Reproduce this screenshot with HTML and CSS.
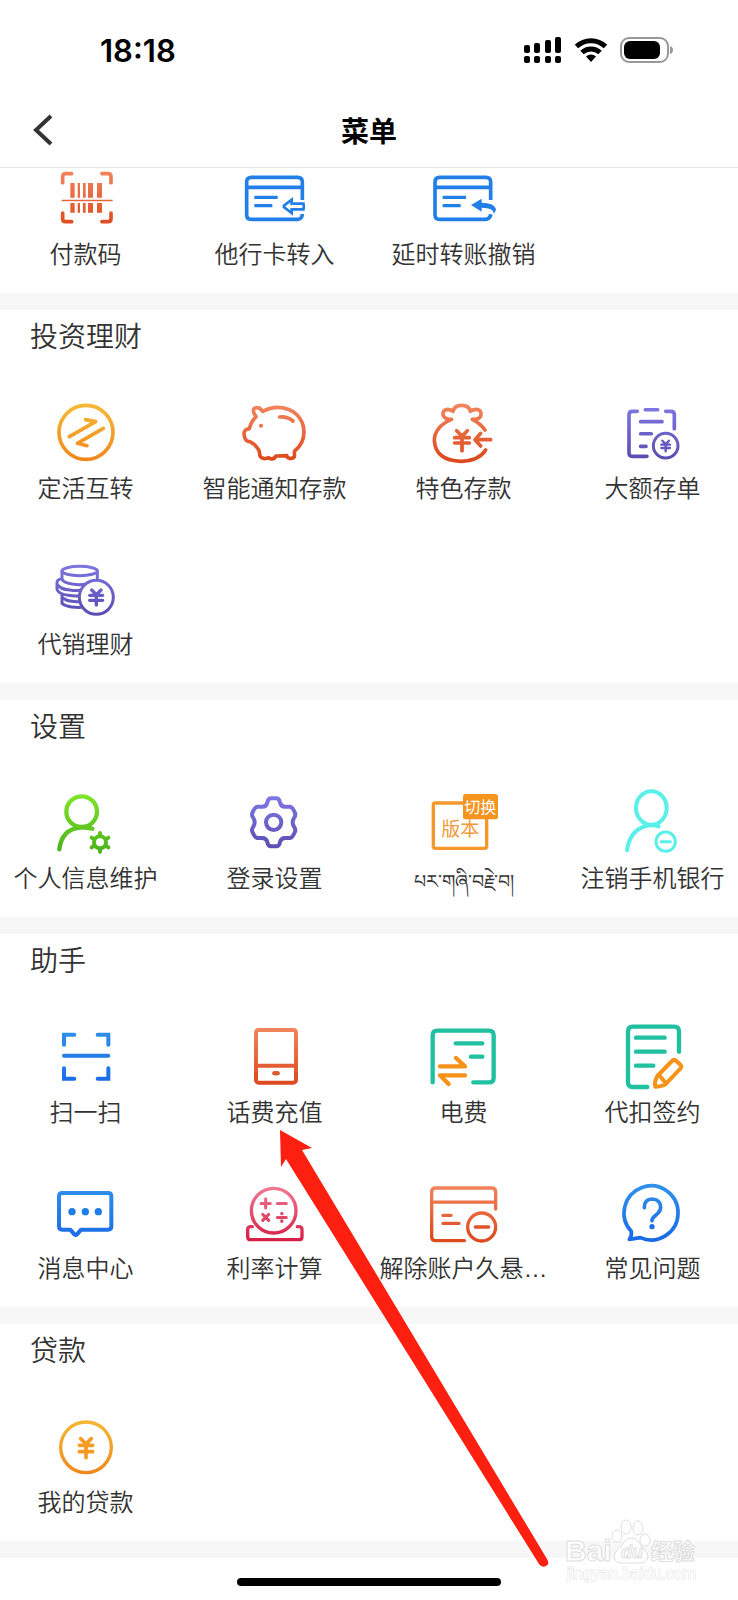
FILE: index.html
```html
<!DOCTYPE html>
<html lang="zh-CN">
<head>
<meta charset="utf-8">
<meta name="viewport" content="width=device-width, initial-scale=1">
<title>菜单</title>
<link rel="stylesheet" href="styles.css">
</head>
<body>
<svg class="defs" aria-hidden="true">
  <defs>
    <linearGradient id="red" gradientUnits="userSpaceOnUse" x1="0" y1="40" x2="0" y2="205"><stop offset="0" stop-color="#f2845c"/><stop offset="1" stop-color="#dc4a1e"/></linearGradient>
    <linearGradient id="blue" gradientUnits="userSpaceOnUse" x1="0" y1="40" x2="0" y2="205"><stop offset="0" stop-color="#3191ea"/><stop offset="1" stop-color="#196ae6"/></linearGradient>
    <linearGradient id="gold" gradientUnits="userSpaceOnUse" x1="0" y1="40" x2="0" y2="205"><stop offset="0" stop-color="#f5b835"/><stop offset="1" stop-color="#f0881c"/></linearGradient>
    <linearGradient id="purple" gradientUnits="userSpaceOnUse" x1="0" y1="40" x2="0" y2="205"><stop offset="0" stop-color="#8078e4"/><stop offset="1" stop-color="#574cb0"/></linearGradient>
    <linearGradient id="green" gradientUnits="userSpaceOnUse" x1="0" y1="40" x2="0" y2="205"><stop offset="0" stop-color="#80e42c"/><stop offset="1" stop-color="#4cb41c"/></linearGradient>
    <linearGradient id="pink" gradientUnits="userSpaceOnUse" x1="0" y1="45" x2="0" y2="205"><stop offset="0" stop-color="#f07a90"/><stop offset="1" stop-color="#d61f48"/></linearGradient>
  </defs>
</svg>

<header class="header">
  <div class="status">
    <span class="time">18:18</span>
    <div class="status-icons">
      <svg width="38" height="26" viewBox="0 0 38 26" aria-label="信号"><g fill="#000"><rect x="0" y="8" width="6" height="8" rx="2"/><rect x="10" y="6" width="6" height="10" rx="2"/><rect x="21" y="3" width="6" height="13" rx="2"/><rect x="31" y="0" width="6" height="16" rx="2"/><rect x="0" y="19" width="6" height="7" rx="2"/><rect x="10" y="19" width="6" height="7" rx="2"/><rect x="21" y="19" width="6" height="7" rx="2"/><rect x="31" y="19" width="6" height="7" rx="2"/></g></svg>
      <svg width="34" height="26" viewBox="0 0 34 26" aria-label="无线网络"><g fill="none" stroke="#000" stroke-width="5"><path d="M2.500 9.500a21 21 0 0 1 29 0"/><path d="M8 15.500a13 13 0 0 1 18 0"/></g><path d="M17 25l-5-5.500a7.500 7.500 0 0 1 10 0z"/></svg>
      <svg width="54" height="26" viewBox="0 0 54 26" aria-label="电池"><rect x="1" y="1" width="47" height="24" rx="8" fill="none" stroke="#999" stroke-width="2"/><rect x="4" y="4" width="36" height="18" rx="6"/><path d="M50 9q3 1 3 4t-3 4z" fill="#999"/></svg>
    </div>
  </div>
  <div class="navbar">
    <button class="back" type="button" aria-label="返回"><svg width="22" height="32" viewBox="0 0 22 32"><path d="M19 2L4 16L19 30" fill="none" stroke="#333" stroke-width="4"/></svg></button>
    <h1 class="title">菜单</h1>
  </div>
</header>

<main>
  <section class="section">
    <div class="grid grid-scrolled">
      <button class="item" type="button">
        <svg class="icon" viewBox="0 0 243 240"><g fill="none" stroke="url(#red)" stroke-width="11" stroke-linecap="round"><path d="M53 74V56Q53 47 62 47H80M171 47H189Q198 47 198 56V74M53 165V182Q53 191 62 191H80M171 191H189Q198 191 198 182V165"/></g><path fill="url(#red)" d="M76 75h13v44h-13zM98 75h7v44h-7zM114 75h8v44h-8zM129 75h15v44h-15zM156 75h15v44h-15zM76 135h13v29h-13zM98 135h7v29h-7zM114 135h8v29h-8zM129 135h15v29h-15zM156 135h15v29h-15zM50 125h153v5h-153z"/></svg>
        <span class="label">付款码</span>
      </button>
      <button class="item" type="button">
        <svg class="icon" viewBox="0 0 243 240"><g fill="none" stroke="#237fe8" stroke-width="11"><path d="M205 126V72Q205 58 191 58H52Q38 58 38 72V170Q38 184 52 184H191Q204 184 205 168M38 88H205"/><path stroke-width="10" d="M61 118H131M61 143H115"/><path stroke-width="8" d="M147 145L173 125V137H212M212 154H173V165L147 145M209 137V154"/></g></svg>
        <span class="label">他行卡转入</span>
      </button>
      <button class="item" type="button">
        <svg class="icon" viewBox="0 0 243 240"><g fill="none" stroke="#237fe8" stroke-width="11"><path d="M203 126V72Q203 58 189 58H50Q36 58 36 72V170Q36 184 50 184H187Q200 184 204 169M36 88H203"/><path stroke-width="10" d="M59 118H129M59 143H113"/></g><path fill="#237fe8" d="M144 141L176 122V134Q212 134 219 153Q219 160 212 167Q213 149 176 149V161z"/></svg>
        <span class="label">延时转账撤销</span>
      </button>
    </div>
  </section>

  <section class="section">
    <h2 class="heading">投资理财</h2>
    <div class="grid">
      <button class="item" type="button">
        <svg class="icon" viewBox="0 0 243 240"><g fill="none" stroke="url(#gold)" stroke-width="11" stroke-linecap="round" stroke-linejoin="round"><circle cx="123" cy="121" r="81"/><path d="M73 134L152 89L122 83M175 109L97 154L126 161"/></g></svg>
        <span class="label">定活互转</span>
      </button>
      <button class="item" type="button">
        <svg class="icon" viewBox="0 0 243 240"><path fill="none" stroke="url(#red)" stroke-width="11" stroke-linejoin="round" stroke-linecap="round" d="M86 58C102 50 115 46 130 46C178 46 210 78 210 121C210 146 198 164 182 177C179 186 184 190 180 196C172 202 160 200 158 191L126 192C120 203 108 202 104 197C94 202 78 200 77 188C78 178 76 174 70 168C64 160 56 152 48 149C36 150 30 138 30 124C31 112 38 112 46 110C50 94 58 82 66 74C56 60 56 50 64 48C74 44 80 50 86 58ZM137 75Q161 73 177 87"/><circle cx="81" cy="101" r="6" fill="#ec7048"/></svg>
        <span class="label">智能通知存款</span>
      </button>
      <button class="item" type="button">
        <svg class="icon" viewBox="0 0 243 240"><path fill="none" stroke="url(#red)" stroke-width="11" stroke-linejoin="round" stroke-linecap="round" d="M186 114Q172 94 148 82Q170 84 174 70Q176 52 158 52Q150 52 142 58Q138 40 116 40Q94 40 90 58Q82 52 74 52Q58 54 60 68Q64 82 86 82Q34 104 34 146Q38 206 114 208Q168 206 188 174M101 116L117 133L133 116M95 137H139M95 153H139M117 137V176M203 143H156M173 124L156 143L173 162"/></svg>
        <span class="label">特色存款</span>
      </button>
      <button class="item" type="button">
        <svg class="icon" viewBox="0 0 243 240"><g fill="none" stroke="url(#purple)" stroke-width="11" stroke-linecap="round"><path d="M76 58H61Q51 58 51 68V183Q51 193 61 193H105M100 53.200H137M161 58H177Q187 58 187 68V110M86 89H150M86 125.200H118M86 163.200H102"/><circle cx="161" cy="161" r="37" stroke-width="9"/><path stroke-width="7" d="M151 146L161 157L171 146M148 158H174M148 168H174M161 157V178"/></g></svg>
        <span class="label">大额存单</span>
      </button>
      <button class="item" type="button">
        <svg class="icon" viewBox="0 0 243 240"><g fill="none" stroke="url(#purple)" stroke-width="9" stroke-linecap="round"><ellipse cx="104" cy="69" rx="53" ry="14"/><path d="M51 69V94Q58 108 104 110Q113 110 120 109M157 69V90M51 92Q36 94 36 104V124Q40 138 70 142Q86 145 101 144M36 108Q44 124 75 126Q90 129 104 127M51 142V166Q58 174 80 177Q96 179 109 178M53 150Q64 158 80 160Q92 162 101 161"/><circle cx="154" cy="148" r="51"/><path stroke-width="10" d="M140 126L154 140L168 126M134 142H173M134 157H173M154 142V171"/></g></svg>
        <span class="label">代销理财</span>
      </button>
    </div>
  </section>

  <section class="section">
    <h2 class="heading">设置</h2>
    <div class="grid">
      <button class="item" type="button">
        <svg class="icon" viewBox="0 0 243 240"><g fill="none" stroke="url(#green)" stroke-width="13" stroke-linecap="round"><circle cx="110" cy="89" r="46"/><path d="M43 202Q50 142 105 137Q124 135 142 140"/><circle cx="165" cy="181" r="18" stroke-width="12"/><path stroke-width="12" d="M165 159V153M165 203V209M184 170L190 167M184 192L190 196M146 170L140 167M146 192L140 196"/></g></svg>
        <span class="label">个人信息维护</span>
      </button>
      <button class="item" type="button">
        <svg class="icon" viewBox="0 0 243 240"><g fill="none" stroke="url(#purple)" stroke-width="12" stroke-linejoin="round"><circle cx="119" cy="121" r="23"/><path d="M110 49H128Q136 50 138 62Q142 76 156 74L168 74Q176 76 183 93Q186 99 180 108Q172 121 180 134Q186 143 183 149Q176 166 168 168L156 168Q142 166 138 180Q136 192 128 193H110Q102 192 100 180Q96 166 82 168L70 168Q62 166 55 149Q52 143 58 134Q66 121 58 108Q52 99 55 93Q62 76 70 74L82 74Q96 76 100 62Q102 50 110 49Z"/></g></svg>
        <span class="label">登录设置</span>
      </button>
      <button class="item" type="button">
        <svg class="icon" viewBox="0 0 243 240"><rect x="31" y="63" width="160" height="136" rx="6" fill="none" stroke="#f5972a" stroke-width="10"/><text class="icon-text" x="112" y="163" font-size="57" fill="#f09a38">版本</text><rect x="120" y="36" width="105" height="76" rx="8" fill="#f5941f"/><text class="icon-text" x="172" y="92" font-size="48" fill="#fff">切换</text></svg>
        <span class="label label-bo" lang="bo">པར་གཞི་བརྗེ་བ།</span>
      </button>
      <button class="item" type="button">
        <svg class="icon" viewBox="0 0 243 240"><g fill="none" stroke="#58f0e8" stroke-width="12" stroke-linecap="round"><ellipse cx="118" cy="78" rx="46" ry="50"/><path d="M45 205Q54 140 112 130Q126 128 140 133"/><circle cx="161" cy="179" r="29" stroke-width="9"/><path stroke-width="9" d="M147 179H175"/></g></svg>
        <span class="label">注销手机银行</span>
      </button>
    </div>
  </section>

  <section class="section">
    <h2 class="heading">助手</h2>
    <div class="grid">
      <button class="item" type="button">
        <svg class="icon" viewBox="0 0 243 240"><path fill="none" stroke="url(#blue)" stroke-width="12" stroke-linecap="round" d="M57 86V56H88M158 56H190V86M57 157V188H88M158 188H190V157M57 119.200L190 119"/></svg>
        <span class="label">扫一扫</span>
      </button>
      <button class="item" type="button">
        <svg class="icon" viewBox="0 0 243 240"><g fill="none" stroke="url(#red)" stroke-width="12" stroke-linecap="round"><rect x="66" y="42" width="120" height="158" rx="8"/><path d="M66 149.200L186 149M121 172H131"/><path stroke="#dc5a30" d="M121 172H131"/></g></svg>
        <span class="label">话费充值</span>
      </button>
      <button class="item" type="button">
        <svg class="icon" viewBox="0 0 243 240"><g fill="none" stroke="#20c0a0" stroke-width="13" stroke-linecap="round" stroke-linejoin="round"><path d="M29 199V58Q29 44 43 44H198Q212 44 212 58V185Q212 199 198 199H151M98 82H178M144 122H178"/><path stroke="#f59218" d="M51 151H126L99 126M126 178H51L77 204"/></g></svg>
        <span class="label">电费</span>
      </button>
      <button class="item" type="button">
        <svg class="icon" viewBox="0 0 243 240"><g fill="none" stroke="#20c0a0" stroke-width="13" stroke-linecap="round" stroke-linejoin="round"><path d="M106 213H62Q48 213 48 199V46Q48 32 62 32H187Q201 32 201 46V107M72 65H158M72 107H158M72 149H124"/><path stroke="#f59218" stroke-width="12" d="M180 135Q186 129 192 134L206 147Q210 152 205 158L160 205Q155 210 130 212Q126 200 136 180ZM141 177L161 201"/></g></svg>
        <span class="label">代扣签约</span>
      </button>
      <button class="item" type="button">
        <svg class="icon" viewBox="0 0 243 240"><path fill="none" stroke="url(#blue)" stroke-width="12" stroke-linejoin="round" d="M52 63H189Q199 63 199 73V163Q199 173 189 173H108L96 187Q92 191 88 187L76 173H52Q42 173 42 163V73Q42 63 52 63Z"/><g fill="#1f7de8"><circle cx="81" cy="119" r="11"/><circle cx="121" cy="119" r="11"/><circle cx="160" cy="119" r="11"/></g></svg>
        <span class="label">消息中心</span>
      </button>
      <button class="item" type="button">
        <svg class="icon" viewBox="0 0 243 240"><g fill="none" stroke="url(#pink)" stroke-width="10" stroke-linecap="round"><circle cx="119" cy="116" r="67"/><path d="M55 164H50Q41 164 41 173V194Q41 203 50 203H195Q204 203 204 194V173Q204 164 195 164H190"/><path stroke-width="9" d="M81 94.200H109M95 80V108M130 94.200H157M86 127L104 145M104 127L86 145M130 136.200H157"/><path d="M143.500 124V125M143.500 147V148"/></g></svg>
        <span class="label">利率计算</span>
      </button>
      <button class="item" type="button">
        <svg class="icon" viewBox="0 0 243 240"><g fill="none" stroke="url(#red)" stroke-width="10" stroke-linecap="round"><path d="M218 111V60Q218 48 206 48H38Q26 48 26 60V194Q26 206 38 206H124M26 90.200L218 90M60 130.200H84M60 154.200H108"/><circle cx="176" cy="165" r="42"/><path stroke="#e0552a" d="M157 165H197"/></g></svg>
        <span class="label">解除账户久悬<span class="ellipsis">…</span></span>
      </button>
      <button class="item" type="button">
        <svg class="icon" viewBox="0 0 243 240"><g fill="none" stroke="url(#blue)" stroke-width="11" stroke-linecap="round" stroke-linejoin="round"><path d="M58 178A81 81 0 1 1 85 197L52 202Q60 192 58 178Z"/><path d="M97 107Q96 82 121 81Q146 83 146 106Q146 118 132 129Q120 138 120 146"/></g><circle cx="120" cy="164" r="8" fill="#1c72e6"/></svg>
        <span class="label">常见问题</span>
      </button>
    </div>
  </section>

  <section class="section">
    <h2 class="heading">贷款</h2>
    <div class="grid">
      <button class="item" type="button">
        <svg class="icon" viewBox="0 0 243 240"><g fill="none" stroke="url(#gold)" stroke-width="10" stroke-linecap="round"><circle cx="123" cy="124" r="76"/><path stroke="#f59a22" stroke-width="11" d="M107 98L123 114L139 98M103 118H143M103 137H143M123 114V155"/></g></svg>
        <span class="label">我的贷款</span>
      </button>
    </div>
  </section>
</main>

<footer class="footer"><div class="home-bar"></div></footer>

<svg class="pointer" width="272" height="440" viewBox="0 0 272 440" aria-hidden="true"><path fill="#fd2011" d="M0 0L32 18L22 20L267 429Q270 434 266 436Q262 438 259 434L6 29L1 37Z"/></svg>

<svg class="watermark" width="136" height="66" viewBox="0 0 136 66" aria-hidden="true">
  <g fill="#fff" stroke="#dedede" stroke-width="1">
    <text class="wm-bold" x="1" y="43" font-size="30">Bai</text>
    <ellipse cx="53" cy="18" rx="5" ry="6"/><ellipse cx="62" cy="9" rx="5" ry="7"/><ellipse cx="74" cy="10" rx="5" ry="7"/><ellipse cx="81" cy="22" rx="5" ry="6"/>
    <path d="M67 20Q74 20 77 28Q84 34 84 39Q82 46 74 45H58Q50 45 50 38Q51 34 58 27Q62 20 67 20Z"/>
    <text class="wm-bold wm-du" x="57" y="40" font-size="18">du</text>
    <text class="wm-cn" x="87" y="41" font-size="22">经验</text>
  </g>
  <text class="wm-url" x="3" y="61" font-size="16">jingyan.baidu.com</text>
</svg>
</body>
</html>
```
FILE: styles.css
```css
* { box-sizing: border-box; }

body {
  margin: 0;
  position: relative;
  background: #fff;
  color: #333;
  font-family: "Noto Sans CJK SC", sans-serif;
}

.defs {
  position: absolute;
  width: 0;
  height: 0;
}

.header {
  position: relative;
  z-index: 1;
  background: #fff;
  border-bottom: 1px solid #e6e6e6;
}

.status {
  display: flex;
  justify-content: space-between;
  align-items: center;
  height: 100px;
  padding: 0 64px 0 100px;
}

.time {
  color: #000;
  font-family: Inter, sans-serif;
  font-size: 31px;
  font-weight: 600;
}

.status-icons {
  display: flex;
  gap: 12px;
}

.navbar {
  display: grid;
  grid-template-columns: 1fr auto 1fr;
  align-items: center;
  height: 67px;
  padding-bottom: 8px;
}

.back {
  justify-self: start;
  display: flex;
  margin-left: 20px;
  padding: 8px 12px;
  border: 0;
  background: none;
}

.title {
  margin: 0;
  color: #000;
  font-size: 28px;
  font-weight: 700;
  line-height: 40px;
}

.section { border-bottom: 17px solid #f7f7f7; }

.heading {
  margin: 0;
  padding: 5px 30px 16px;
  font-size: 28px;
  font-weight: 350;
  line-height: 40px;
}

.grid {
  display: grid;
  grid-template-columns: repeat(4, minmax(0, 1fr));
  column-gap: 18px;
}

.grid-scrolled { margin-top: -31px; }

.item {
  display: flex;
  flex-direction: column;
  align-items: center;
  padding: 21px 0 25px;
  border: 0;
  background: none;
  color: inherit;
  font: inherit;
}

.icon {
  display: block;
  width: 81px;
  height: 80px;
}

.icon-text {
  font-family: "Noto Sans CJK SC", sans-serif;
  text-anchor: middle;
}

.label {
  font-size: 24px;
  font-weight: 350;
  line-height: 30px;
  white-space: nowrap;
}

.label-bo {
  padding-top: 6px;
  font-size: 19px;
  line-height: 24px;
}

.ellipsis {
  font-family: "Liberation Sans", sans-serif;
  line-height: 1;
}

.footer { padding: 20px 0 14px; }

.home-bar {
  width: 264px;
  height: 8px;
  margin: 0 auto;
  border-radius: 4px;
  background: #000;
}

.pointer {
  position: absolute;
  z-index: 2;
  left: 280px;
  top: 1130px;
}

.watermark {
  position: absolute;
  right: 38px;
  bottom: 16px;
}

.wm-bold {
  font-family: "Liberation Sans", sans-serif;
  font-weight: 700;
}

.wm-du { font-style: italic; }

.wm-cn {
  font-family: "Noto Sans CJK SC", sans-serif;
  font-weight: 700;
}

.wm-url {
  font-family: "Liberation Sans", sans-serif;
  fill: #fff;
  stroke: #e4e4e4;
  stroke-width: 1px;
  paint-order: stroke;
}
```
